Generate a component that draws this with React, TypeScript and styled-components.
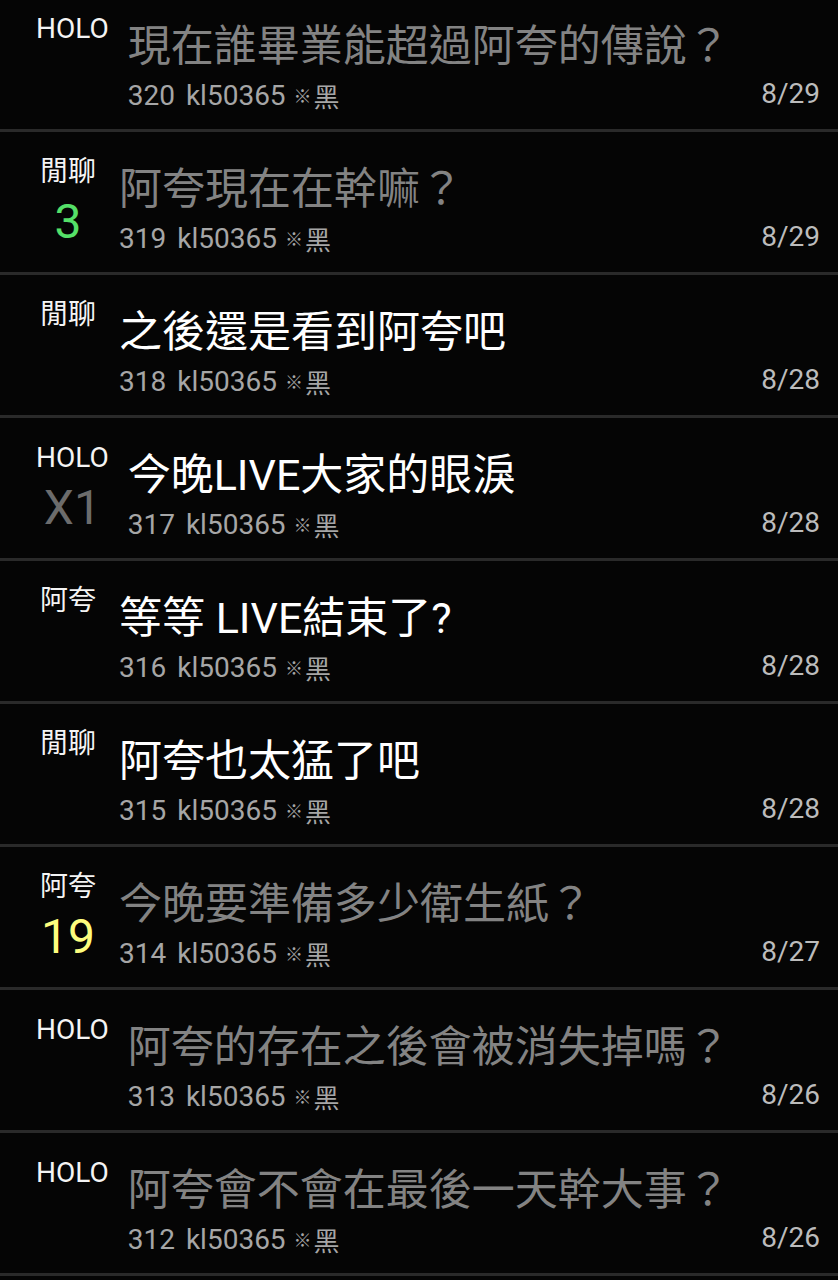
import React from "react";
import styled, { createGlobalStyle } from "styled-components";

const GlobalStyle = createGlobalStyle`
  html, body {
    margin: 0;
    padding: 0;
    background: #050505;
  }
  body {
    font-family: Roboto, "Noto Sans CJK TC", sans-serif;
    -webkit-font-smoothing: antialiased;
  }
`;

type Tone = "green" | "yellow" | "grey";

interface Post {
  board: string;
  count?: string;
  tone?: Tone;
  title: string;
  read: boolean;
  no: number;
  date: string;
}

const posts: Post[] = [
  { board: "HOLO", title: "現在誰畢業能超過阿夸的傳說？", read: true, no: 320, date: "8/29" },
  { board: "閒聊", count: "3", tone: "green", title: "阿夸現在在幹嘛？", read: true, no: 319, date: "8/29" },
  { board: "閒聊", title: "之後還是看到阿夸吧", read: false, no: 318, date: "8/28" },
  { board: "HOLO", count: "X1", tone: "grey", title: "今晚LIVE大家的眼淚", read: false, no: 317, date: "8/28" },
  { board: "阿夸", title: "等等 LIVE結束了?", read: false, no: 316, date: "8/28" },
  { board: "閒聊", title: "阿夸也太猛了吧", read: false, no: 315, date: "8/28" },
  { board: "阿夸", count: "19", tone: "yellow", title: "今晚要準備多少衛生紙？", read: true, no: 314, date: "8/27" },
  { board: "HOLO", title: "阿夸的存在之後會被消失掉嗎？", read: true, no: 313, date: "8/26" },
  { board: "HOLO", title: "阿夸會不會在最後一天幹大事？", read: true, no: 312, date: "8/26" },
];

const toneColor: Record<Tone, string> = {
  green: "#55e068",
  yellow: "#fdfd7e",
  grey: "#6c6c6c",
};

const Page = styled.div`
  height: 1280px;
  overflow: hidden;
  background: #050505;
`;

const List = styled.ul`
  list-style: none;
  margin: -11px 0 0 0;
  padding: 0;
`;

const Row = styled.li`
  display: flex;
  height: 140px;
  padding: 0 18px 0 36px;
  gap: 19px;
  border-bottom: 3px solid #2a2a2a;
`;

const Side = styled.div`
  display: flex;
  flex-direction: column;
  align-items: center;
  min-width: 64px;
  padding-top: 22px;
`;

const Board = styled.div`
  font-size: 28px;
  line-height: 36px;
  color: #f4f4f4;
  white-space: nowrap;
`;

const Count = styled.div<{ $tone: Tone }>`
  margin-top: 7px;
  font-size: 48px;
  line-height: 50px;
  color: ${(p) => toneColor[p.$tone]};
`;

const Body = styled.div`
  flex: 1;
  min-width: 0;
  display: flex;
  flex-direction: column;
  padding-top: 32px;
`;

const Title = styled.div<{ $read: boolean }>`
  font-size: 43px;
  line-height: 50px;
  color: ${(p) => (p.$read ? "#838383" : "#ffffff")};
  white-space: nowrap;
  overflow: hidden;
`;

const MetaRow = styled.div`
  display: flex;
  justify-content: space-between;
  align-items: flex-start;
  margin-top: 7px;
`;

const Meta = styled.div`
  display: flex;
  align-items: center;
  font-size: 28px;
  line-height: 36px;
  color: #a6a6a6;
  white-space: nowrap;
`;

const Author = styled.span`
  margin-left: 11px;
`;

const Mark = styled.span`
  font-family: "Noto Sans CJK TC", sans-serif;
  font-size: 18px;
  line-height: 36px;
  margin: -3px 2px 0 8px;
`;

const Tag = styled.span`
  font-family: "Noto Sans CJK TC", sans-serif;
  font-size: 26px;
`;

const DateText = styled.div`
  font-size: 28px;
  line-height: 32px;
  color: #bcbcbc;
`;

export default function App() {
  return (
    <Page>
      <GlobalStyle />
      <List>
        {posts.map((p) => (
          <Row key={p.no}>
            <Side>
              <Board>{p.board}</Board>
              {p.count && p.tone && <Count $tone={p.tone}>{p.count}</Count>}
            </Side>
            <Body>
              <Title $read={p.read}>{p.title}</Title>
              <MetaRow>
                <Meta>
                  <span>{p.no}</span>
                  <Author>kl50365</Author>
                  <Mark>※</Mark>
                  <Tag>黑</Tag>
                </Meta>
                <DateText>{p.date}</DateText>
              </MetaRow>
            </Body>
          </Row>
        ))}
        <Row />
      </List>
    </Page>
  );
}
